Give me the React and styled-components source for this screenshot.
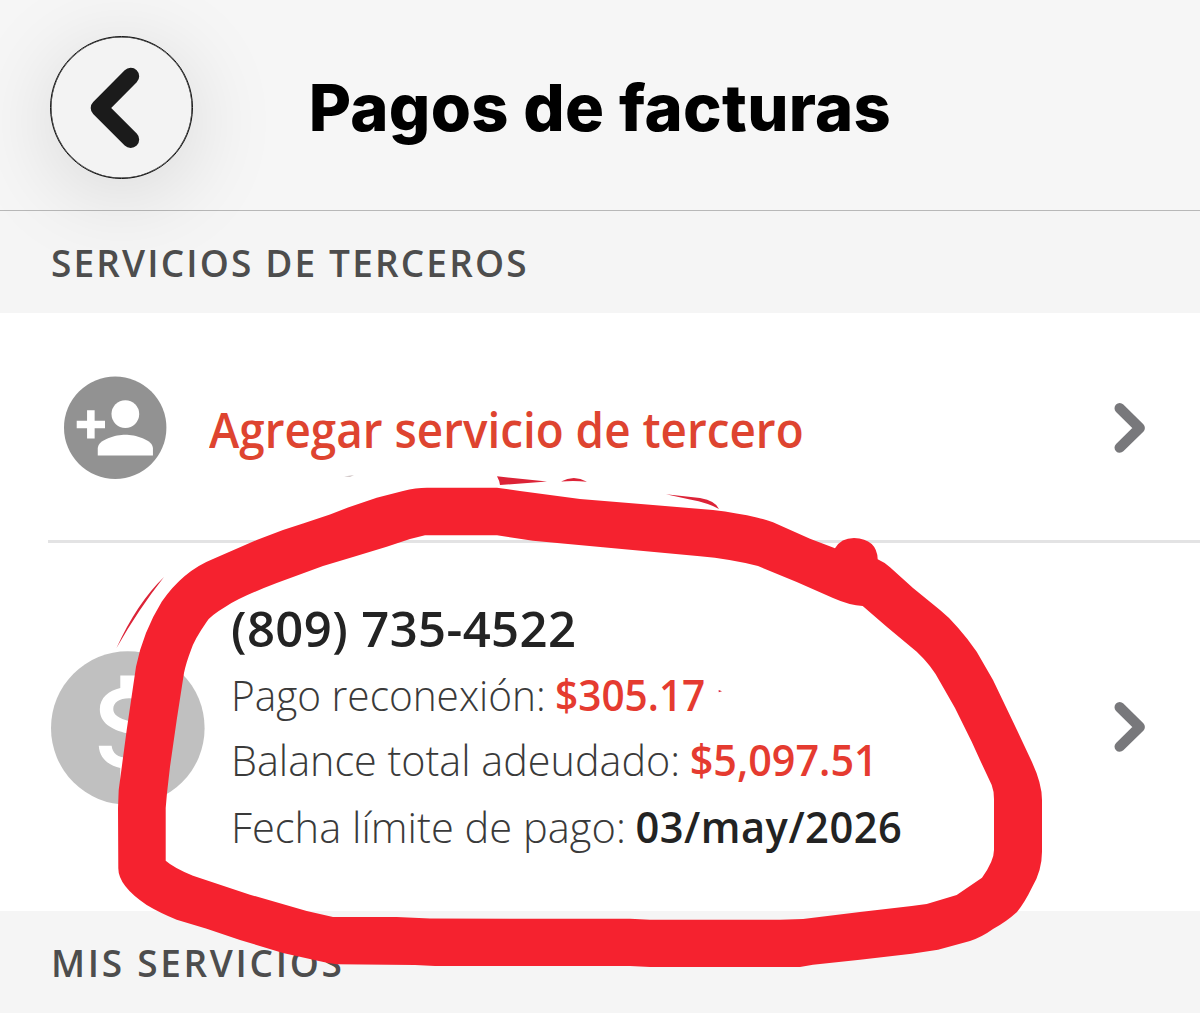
import React from "react";
import styled, { createGlobalStyle } from "styled-components";

const App = () => {
  return (
    <>
      <GlobalStyle />
      <Screen>
        <Header>
          <BackButton aria-label="Volver">
            <svg width="50" height="82" viewBox="0 0 50 82">
              <path d="M40.7 9.3 L9.2 41 L40.7 72.6" fill="none" stroke="#1b1b1b" strokeWidth="17" strokeLinecap="round" strokeLinejoin="round" />
            </svg>
          </BackButton>
          <Title>Pagos de facturas</Title>
        </Header>

        <SectionTitle $spacing={2.15}>SERVICIOS DE TERCEROS</SectionTitle>

        <AddRow>
          <AddPersonIcon />
          <AddLabel>Agregar servicio de tercero</AddLabel>
          <Chevron />
        </AddRow>
        <Divider />
        <AccountRow>
          <MoneyIcon />
          <Account>
            <Phone>(809) 735-4522</Phone>
            <Detail $stretch={0.943}>
              <Label>Pago reconexión:</Label>
              <Value $due>$305.17</Value>
            </Detail>
            <Detail $stretch={0.961}>
              <Label>Balance total adeudado:</Label>
              <Value $due>$5,097.51</Value>
            </Detail>
            <Detail $stretch={0.968} $last>
              <Label>Fecha límite de pago:</Label>
              <Value $spacing={0.5}>03/may/2026</Value>
            </Detail>
          </Account>
          <Chevron />
        </AccountRow>

        <SectionTitle $spacing={2.7}>MIS SERVICIOS</SectionTitle>
        <Marker />
      </Screen>
    </>
  );
};

const Chevron = () => (
  <svg width="32" height="52" viewBox="0 0 32 52">
    <path d="M5.7 6.2 L25.7 26 L5.7 45.6" fill="none" stroke="#78787b" strokeWidth="10.4" strokeLinecap="round" strokeLinejoin="round" />
  </svg>
);

const AddPersonIcon = () => (
  <svg width="103" height="103" viewBox="0 0 103 103">
    <circle cx="51.2" cy="51.7" r="51.2" fill="#929292" />
    <g transform="translate(9.6 10.5) scale(3.45)" fill="#fff">
      <circle cx="15" cy="8" r="4.02" />
      <path d="M15 14c-2.67 0-8 1.34-8 4v2h16v-2c0-2.66-5.33-4-8-4z" />
      <path d="M6.1 9.9V6.9H3.9v3H.9v2.2h3v3h2.2v-3h3V9.9z" />
    </g>
  </svg>
);

const MoneyIcon = () => (
  <svg width="154" height="155" viewBox="0 0 154 155">
    <circle cx="76.8" cy="78" r="76.8" fill="#c0c0c0" />
    <path
      transform="translate(10.8 7.9) scale(5.85)"
      fill="#fff"
      d="M11.8 10.9c-2.27-.59-3-1.2-3-2.15 0-1.09 1.01-1.85 2.7-1.85 1.78 0 2.44.85 2.5 2.1h2.21c-.07-1.72-1.12-3.3-3.21-3.81V3h-3v2.16c-1.94.42-3.5 1.68-3.5 3.61 0 2.31 1.91 3.46 4.7 4.13 2.5.6 3 1.48 3 2.41 0 .69-.49 1.79-2.7 1.79-2.06 0-2.87-.92-2.98-2.1h-2.2c.12 2.19 1.76 3.42 3.68 3.83V21h3v-2.15c1.95-.37 3.5-1.5 3.5-3.55 0-2.84-2.43-3.81-4.7-4.4z"
    />
  </svg>
);

// hand drawn loop around the account, plus the leftovers of an erased stroke
const Marker = () => (
  <MarkerSvg width="1200" height="1030" viewBox="0 0 1200 1030">
    <path
      fill="#f5222f"
      fillRule="evenodd"
      d="M303 523.5 L330 514.5 L348 507.5 L376.7 497.7 L403 491 Q416 487.7 427 487.7 L497 487.7 L520 491 L580 499 L653 505 L713 510 Q738 513 756.7 517.5 Q766 519.6 773 522.3 L810 538.7 L835 548.3
      Q841 538 854 538 Q877 539 877.7 559.3 Q884 562 890 567.3 L913 588 L940 610 Q950 618 958 627.7 Q968 639 976.7 651.7 L993 680 L1013 721.7 L1031 760 Q1042 783 1042 800
      L1042 851.7 Q1042 871 1031.7 888 Q1025 902 1017 912 Q1006 922 993 929 Q982 937 970 941 L938 949.7 L911.7 953.7 L860 959.7 L813 964.7 L800 967 L650 967 L630 966 L435 966 L415 965 L336.7 964.3 Q328 963.5 320 961.3
      L283 953 L240 940 L206.7 928.7 L176.7 919.7 Q160 913 146.7 905 Q118.3 886 118.3 868.3 L118 808.3 L118.7 790 L126.7 730 L136 666.7 Q143 632 161.7 601.7 Q183 571 213 559 L256.7 540 L283 530 Z
      M425 535.3 L410 539 L386.7 546.7 L353 557 L323 566 L276.7 583 Q240 597 226.7 606 Q210 616 206.7 621.7 Q194 640 191 650 Q186 663 184 673 L176.7 720 L170 766.7 L167 793 L165.7 808 L165.7 860.7
      Q174 868 193 875.7 L250 894.7 L306.7 911 L333 917 L396.7 917 L430 918.6 L630 918.8 L650 919.8 L780 919.8 L803 919 L860 912 L911.7 906 L926.7 904 L956.7 895 L982 877.7 Q994 861 994 850 L994 799 Q994 791 991.7 785 L980 760
      L971.7 741.7 L955 708 L940 681.7 Q932 666 916.7 651.7 L886.7 626.7 L862.7 606 Q850 605.5 833 598 L796.7 582 L758 566 Q730 559 700 556.3 L603 547.3 L533 540.7 L497 535.3 Z"
    />
    <g fill="#dc2337">
      <path d="M497 476.3 L547 481.4 L500 485 Q499.6 481 497 476.3 Z" />
      <path d="M561 481.6 Q574 474.5 587 481.8 Q574 480.5 561 481.6 Z" />
      <path d="M666 494.2 L700 498 Q716 501 719 509 Q708 503 690 499.6 Z" />
      <path d="M164 577 Q137 603 116.5 648 Q138 610 164 577 Z" />
      <path d="M718.7 690 L722 691.2 L718.7 692.2 Z" />
    </g>
    <path d="M344 476.5 L354 475 L350 477 Z" fill="#cfc4c4" />
  </MarkerSvg>
);

const GlobalStyle = createGlobalStyle`
  body {
    margin: 0;
    background: #fff;
  }
`;

const Screen = styled.div`
  position: relative;
  width: 1200px;
  height: 1030px;
  overflow: hidden;
  background: #fff;
  font-family: "Open Sans", "Noto Sans", sans-serif;
`;

const Header = styled.header`
  display: grid;
  grid-template-columns: 143px 1fr 143px;
  align-items: center;
  box-sizing: border-box;
  height: 211px;
  padding: 4px 50px 0;
  background: #f6f6f6;
  border-bottom: 1px solid #b8b8b8;
`;

const BackButton = styled.button`
  display: flex;
  align-items: center;
  justify-content: center;
  box-sizing: border-box;
  width: 143px;
  height: 143px;
  padding: 2px 13px 0 0;
  border: 1px solid #111;
  border-radius: 50%;
  background: #f3f3f3;
  box-shadow: inset 0 0 0 0.5px #111, 0 14px 90px rgba(0, 0, 0, 0.13);
  z-index: 1;
`;

const Title = styled.h1`
  margin: 0;
  padding-top: 1px;
  font-family: Inter, sans-serif;
  font-size: 65px;
  font-weight: 800;
  line-height: 80px;
  letter-spacing: 0.3px;
  text-align: center;
  color: #000;
  white-space: nowrap;
`;

const SectionTitle = styled.h2`
  box-sizing: border-box;
  height: 102px;
  margin: 0;
  padding: 1px 0 0 51px;
  background: #f5f5f5;
  font-size: 37px;
  font-weight: 600;
  line-height: 102px;
  letter-spacing: ${(props) => props.$spacing}px;
  color: #4d4d4d;
`;

const Row = styled.div`
  display: flex;
  box-sizing: border-box;
  background: #fff;

  > svg {
    flex: none;
  }
`;

const AddRow = styled(Row)`
  align-items: center;
  height: 227px;
  padding: 2px 54px 0 64px;
`;

const AccountRow = styled(Row)`
  align-items: center;
  height: 368px;
  padding: 0 54px 0 51px;
`;

const AddLabel = styled.span`
  flex: 1;
  margin-left: 42px;
  padding-top: 2px;
  font-size: 49px;
  font-weight: 600;
  line-height: 66px;
  color: #de4430;
  white-space: nowrap;
  transform: scaleX(0.935);
  transform-origin: left;
`;

const Divider = styled.div`
  height: 3px;
  margin-left: 48px;
  background: #e3e3e4;
`;

const Account = styled.div`
  flex: 1;
  align-self: flex-start;
  margin-left: 26px;
  padding-top: 51px;
`;

const Phone = styled.div`
  font-size: 49px;
  font-weight: 600;
  line-height: 69px;
  letter-spacing: 0.4px;
  color: #232323;
`;

// slightly narrowed text, anchored to the left edge of the column
const Detail = styled.div`
  display: flex;
  gap: 10px;
  margin-top: ${(props) => (props.$last ? 3 : 0)}px;
  font-size: 43px;
  line-height: 64.5px;
  white-space: nowrap;
  transform: scaleX(${(props) => props.$stretch});
  transform-origin: left;
`;

const Label = styled.span`
  font-weight: 300;
  color: #3a3a3a;
`;

const Value = styled.span`
  font-weight: 600;
  letter-spacing: ${(props) => props.$spacing || 0}px;
  color: ${(props) => (props.$due ? "#e53b30" : "#232323")};
`;

const MarkerSvg = styled.svg`
  position: absolute;
  top: 0;
  left: 0;
  z-index: 2;
  pointer-events: none;
`;

export default App;
